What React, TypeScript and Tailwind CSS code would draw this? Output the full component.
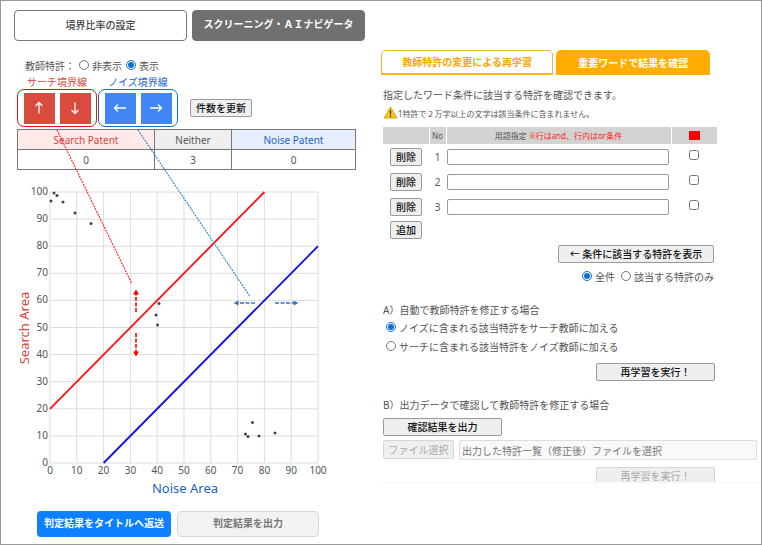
import type { ReactNode } from "react";

const X0 = 50;
const Y0 = 463;
const px = (v: number) => X0 + v * 2.68;
const py = (v: number) => Y0 - v * 2.71;
const TICKS = [0, 10, 20, 30, 40, 50, 60, 70, 80, 90, 100];

const POINTS = [
  [51, 201], [54, 193], [57, 195.5], [63, 202], [75, 213], [91, 223.5],
  [159, 303.5], [156, 315], [157.5, 325],
  [252.5, 422.5], [245.5, 434], [248, 436.5], [259, 436], [275, 433],
];

function GrayButton({ children, className = "", disabled = false }: { children: ReactNode; className?: string; disabled?: boolean }) {
  return (
    <button
      type="button"
      disabled={disabled}
      className={`shrink-0 rounded-xs border border-[#9a9a9a] bg-[#efefef] text-[10px] leading-4 font-medium text-[#111] disabled:border-[#d6d6d6] disabled:font-normal disabled:text-[#aaa] ${className}`}
    >
      {children}
    </button>
  );
}

function Radio({ name, label, checked = false }: { name: string; label: string; checked?: boolean }) {
  return (
    <label className="flex items-center gap-[3px]">
      <input type="radio" name={name} defaultChecked={checked} className="mb-[2px] size-[10px] accent-[#0a6fd6]" />
      {label}
    </label>
  );
}

function ArrowButton({ label, d, className }: { label: string; d: string; className: string }) {
  return (
    <button type="button" aria-label={label} className={`flex size-[31px] items-center justify-center text-white ${className}`}>
      <svg viewBox="0 0 14 14" className="size-[14px]" fill="none" stroke="currentColor" strokeWidth="1.3">
        <path d={d} />
      </svg>
    </button>
  );
}

function Chart() {
  return (
    <svg
      viewBox="17 170 338 328"
      className="pointer-events-none relative block h-[328px] w-[338px] overflow-visible"
      fontFamily="'Noto Sans', sans-serif"
      role="img"
      aria-label="Search Area / Noise Area"
    >
      <g stroke="#dcdcdc">
        {TICKS.map((t) => (
          <g key={t}>
            <line x1={px(t)} x2={px(t)} y1={py(100)} y2={Y0} />
            <line x1={X0} x2={px(100)} y1={py(t)} y2={py(t)} />
          </g>
        ))}
      </g>
      <g fontSize="10" fill="#555">
        {TICKS.map((t) => (
          <g key={t}>
            <text x={px(t)} y="474" textAnchor="middle">{t}</text>
            <text x="48" y={py(t) + 3} textAnchor="end">{t}</text>
          </g>
        ))}
      </g>
      <text x="185" y="493" textAnchor="middle" fontSize="13" fill="#1a5fc8">Noise Area</text>
      <text transform="translate(29 328) rotate(-90)" textAnchor="middle" fontSize="13" fill="#d9453a">Search Area</text>

      <g fill="#444">
        {POINTS.map(([x, y]) => (
          <circle key={`${x}-${y}`} cx={x} cy={y} r="1.5" />
        ))}
      </g>
      <line x1={px(0)} y1={py(20)} x2={px(80)} y2={py(100)} stroke="#ff0f0f" strokeWidth="1.8" />
      <line x1={px(20)} y1={py(0)} x2={px(100)} y2={py(80)} stroke="#0f0fee" strokeWidth="1.8" />

      <line x1="57" y1="130" x2="132" y2="284" stroke="#ff2020" strokeWidth="1.1" strokeDasharray="2 1" />
      <line x1="138" y1="130" x2="250" y2="296.5" stroke="#2a86cc" strokeWidth="1.1" strokeDasharray="2 1" />

      <g stroke="#f00" strokeWidth="1.6" strokeDasharray="4 1.5">
        <path d="M136 312V293M136 333V352" />
      </g>
      <path d="M136 289.5l3 5h-6zM136 356.5l3-5h-6z" fill="#f00" />
      <g stroke="#3b6fc4" strokeWidth="1.4" strokeDasharray="4 1.5">
        <path d="M255 303H238M275 303H294" />
      </g>
      <path d="M233.500 303l5-2.500v5zM298.500 303l-5-2.500v5z" fill="#3b6fc4" />
    </svg>
  );
}

function WarningIcon() {
  return (
    <svg viewBox="0 0 15 13" className="mb-[3px] h-[13px] w-[15px]">
      <path d="M7.500 1L14 12H1z" fill="#f8c91c" stroke="#d9a900" strokeLinejoin="round" />
      <path d="M7.500 4.200v4.300M7.500 9.600v1.400" stroke="#3d3200" strokeWidth="1.300" />
    </svg>
  );
}

function LeftPane() {
  return (
    <section className="pt-[9px]">
      <nav className="grid grid-cols-2 gap-[5px] pr-4 pl-[13px] text-[10px] font-bold">
        <button type="button" className="h-[31px] rounded-[4px] border border-[#777] bg-white pb-[2px] font-medium text-[#444]">
          境界比率の設定
        </button>
        <button type="button" className="h-[31px] rounded-[4px] border border-[#707070] bg-[#707070] pb-[3px] text-white">
          スクリーニング・ＡＩナビゲータ
        </button>
      </nav>

      <div className="pt-4 pr-[25px] pl-4">
        <fieldset className="flex h-[18px] items-center gap-1 pl-2">
          <span>教師特許：</span>
          <Radio name="teacher" label="非表示" />
          <Radio name="teacher" label="表示" checked />
        </fieldset>

        <div className="flex items-end">
          <div className="w-20 text-center">
            <div className="leading-[14px] text-[#d9453a]">サーチ境界線</div>
            <div className="flex h-[38px] items-center justify-center gap-[5px] rounded-[7px] border border-[#ee1111]">
              <ArrowButton label="上へ" d="M7 12.500V1.500M3.500 5L7 1.500L10.500 5" className="bg-[#db4a3f]" />
              <ArrowButton label="下へ" d="M7 1.500V12.500M3.500 9L7 12.500L10.500 9" className="bg-[#db4a3f]" />
            </div>
          </div>
          <div className="ml-[1px] w-20 text-center">
            <div className="leading-[14px] text-[#1a62d0]">ノイズ境界線</div>
            <div className="flex h-[38px] items-center justify-center gap-[5px] rounded-[7px] border border-[#1271c8]">
              <ArrowButton label="左へ" d="M13 7H1.500M5 3.500L1.500 7L5 10.500" className="bg-[#4285f4]" />
              <ArrowButton label="右へ" d="M1 7H12.500M9 3.500L12.500 7L9 10.500" className="bg-[#4285f4]" />
            </div>
          </div>
          <GrayButton className="mb-[10px] ml-3 w-[62px]">件数を更新</GrayButton>
        </div>

        <table className="mt-[2px] w-full table-fixed border-collapse text-center">
          <colgroup>
            <col className="w-[137px]" />
            <col className="w-[77px]" />
            <col />
          </colgroup>
          <thead>
            <tr className="h-5">
              <th className="border border-[#777] bg-[#ffe9e9] font-normal text-[#d9453a]">Search Patent</th>
              <th className="border border-[#777] bg-[#efefef] font-normal">Neither</th>
              <th className="border border-[#777] bg-[#e7effe] font-normal text-[#1a62d0]">Noise Patent</th>
            </tr>
          </thead>
          <tbody>
            <tr className="h-5">
              <td className="border border-[#777]">0</td>
              <td className="border border-[#777]">3</td>
              <td className="border border-[#777]">0</td>
            </tr>
          </tbody>
        </table>
        <Chart />
      </div>
    </section>
  );
}

function RightPane() {
  return (
    <section className="mt-[49px] h-[433px] overflow-hidden border-b border-[#f4f4f4] pr-1">
      <nav className="flex gap-[3px] pr-[47px] text-[10px] font-bold">
        <button type="button" className="h-[25px] flex-[172] rounded-t-[5px] border border-b-2 border-[#ffb52a] bg-white text-[#ffa500]">
          教師特許の変更による再学習
        </button>
        <button type="button" className="h-[25px] flex-[155] rounded-t-[5px] bg-[#ffae00] text-white">
          重要ワードで結果を確認
        </button>
      </nav>

      <div className="pt-3 pl-[2px]">
        <p>指定したワード条件に該当する特許を確認できます。</p>
        <p className="mt-[3px] flex h-4 items-center text-[8px]">
          <WarningIcon />
          1特許で２万字以上の文字は該当条件に含まれません。
        </p>

        <div className="max-w-[334px]">
          <table className="mt-[5px] w-full table-fixed border-collapse">
            <colgroup>
              <col className="w-[46px]" />
              <col className="w-[17px]" />
              <col />
              <col className="w-[46px]" />
            </colgroup>
            <thead>
              <tr className="h-[17px] bg-[#d3d3d3] text-[8px] leading-4">
                <th />
                <th className="border-l border-white p-0 font-normal">No</th>
                <th className="border-l border-white p-0 font-normal">
                  用語指定 <span className="text-[#ff1a1a]">※行はand、行内はor条件</span>
                </th>
                <th className="border-l border-white p-0">
                  <div className="mx-auto h-[9px] w-[11px] bg-[#ff0000]" />
                </th>
              </tr>
            </thead>
            <tbody>
              {[1, 2, 3].map((n) => (
                <tr key={n} className="h-[25px]">
                  <td className="p-0 pl-[7px] align-middle">
                    <GrayButton className="block w-8">削除</GrayButton>
                  </td>
                  <td className="p-0 text-center">{n}</td>
                  <td className="p-0 pr-[2px] pl-[1px]">
                    <input type="text" aria-label={`用語指定 ${n}`} className="block h-4 w-full rounded-xs border border-[#999] bg-white px-1" />
                  </td>
                  <td className="p-0 pb-1">
                    <input type="checkbox" aria-label={`除外 ${n}`} className="mx-auto block size-[10px]" />
                  </td>
                </tr>
              ))}
            </tbody>
          </table>
          <GrayButton className="mt-[2px] ml-[7px] block w-8">追加</GrayButton>

          <div className="mt-[6px] flex flex-col items-end pr-[3px]">
            <GrayButton className="w-[156px]">← 条件に該当する特許を表示</GrayButton>
            <fieldset className="mt-[6px] flex h-4 gap-[6px]">
              <Radio name="range" label="全件" checked />
              <Radio name="range" label="該当する特許のみ" />
            </fieldset>
          </div>

          <fieldset className="mt-[17px]">
            <legend className="h-[18px]">A）自動で教師特許を修正する場合</legend>
            <div className="flex flex-col gap-[3px] pl-[3px]">
              <Radio name="mode" label="ノイズに含まれる該当特許をサーチ教師に加える" checked />
              <Radio name="mode" label="サーチに含まれる該当特許をノイズ教師に加える" />
            </div>
          </fieldset>
          <div className="mt-2 flex justify-end pr-[2px]">
            <GrayButton className="w-[119px]">再学習を実行！</GrayButton>
          </div>
        </div>

        <p className="mt-4">B）出力データで確認して教師特許を修正する場合</p>
        <GrayButton className="mt-[5px] block w-[119px]">確認結果を出力</GrayButton>
        <div className="mt-1 flex gap-[5px]">
          <GrayButton disabled className="h-[19px] w-[71px]">ファイル選択</GrayButton>
          <input
            type="text"
            readOnly
            aria-label="ファイル"
            value="出力した特許一覧（修正後）ファイルを選択"
            className="h-5 min-w-0 flex-1 rounded-xs border border-[#ddd] bg-[#f9f9f9] px-[2px] text-[#777]"
          />
        </div>
        <div className="mt-[7px] flex max-w-[334px] justify-end pr-[2px]">
          <GrayButton disabled className="w-[119px]">再学習を実行！</GrayButton>
        </div>
      </div>
    </section>
  );
}

export default function App() {
  return (
    <main className="min-h-screen border border-[#999] bg-white font-['Noto_Sans','Noto_Sans_CJK_JP',sans-serif] text-[10px] leading-4 text-[#555]">
      <div className="grid grid-cols-2">
        <LeftPane />
        <RightPane />
      </div>
      <footer className="flex gap-[6px] pt-[13px] pl-9 font-bold">
        <button type="button" className="h-[26px] w-[134px] rounded-[4px] bg-[#0d80ff] pb-[2px] text-white">
          判定結果をタイトルへ返送
        </button>
        <button type="button" className="h-[26px] w-[142px] rounded-[4px] border border-[#d8d8d8] bg-[#f2f2f2] pb-[2px] text-[#777]">
          判定結果を出力
        </button>
      </footer>
    </main>
  );
}
